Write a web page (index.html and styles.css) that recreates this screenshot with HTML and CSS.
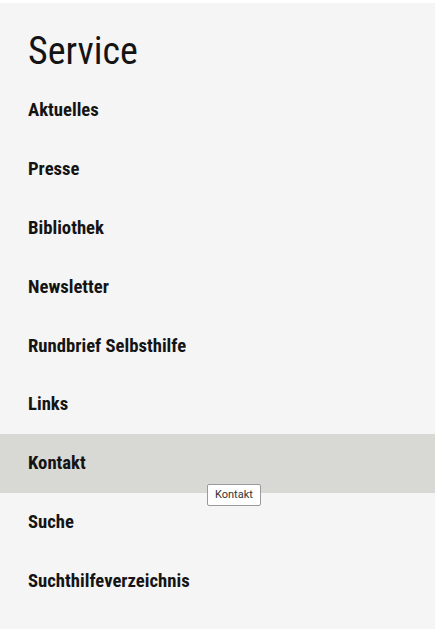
FILE: index.html
```html
<!DOCTYPE html>
<html lang="de">

<head>
    <meta charset="UTF-8">
    <meta name="viewport" content="width=device-width, initial-scale=1.0">
    <title>Service</title>
    <link rel="stylesheet" href="styles.css">
</head>

<body>
    <div class="panel">
        <h2 class="title">Service</h2>
        <ul class="menu">
            <li><a href="#">Aktuelles</a></li>
            <li><a href="#">Presse</a></li>
            <li><a href="#">Bibliothek</a></li>
            <li><a href="#">Newsletter</a></li>
            <li><a href="#">Rundbrief Selbsthilfe</a></li>
            <li><a href="#">Links</a></li>
            <li class="hover"><a href="#">Kontakt</a><span class="tooltip">Kontakt</span></li>
            <li><a href="#">Suche</a></li>
            <li><a href="#">Suchthilfeverzeichnis</a></li>
        </ul>
    </div>
</body>

</html>
```

FILE: styles.css
```css
body {
    background-color: #fff;
    margin: 0;
    padding: 0;
    font-family: "Roboto Condensed", "Liberation Sans Narrow", Roboto, sans-serif;
    color: #141414;
}

.panel {
    margin-top: 3px;
    width: 435px;
    height: 626px;
    background-color: #f5f5f5;
    box-sizing: border-box;
    padding-top: 26px;
}

.title {
    margin: 0 0 0 28px;
    font-size: 38px;
    font-weight: 400;
    line-height: 44px;
    height: 52px;
}

.menu {
    list-style: none;
    margin: 0;
    padding: 0;
}

.menu li {
    position: relative;
    height: 58.8px;
    display: flex;
    align-items: center;
    padding-left: 28px;
}

.menu a {
    color: #141414;
    text-decoration: none;
    font-size: 18.7px;
    font-weight: 700;
}

.menu li.hover {
    background-color: #d8d9d5;
}

.tooltip {
    position: absolute;
    left: 207px;
    top: 50px;
    padding: 3px 7px;
    background: #fff;
    border: 1px solid #9a9a9a;
    border-radius: 2px;
    font-family: Roboto, "Liberation Sans", sans-serif;
    font-size: 11px;
    font-weight: 400;
    color: #333;
    line-height: 14px;
}
```
